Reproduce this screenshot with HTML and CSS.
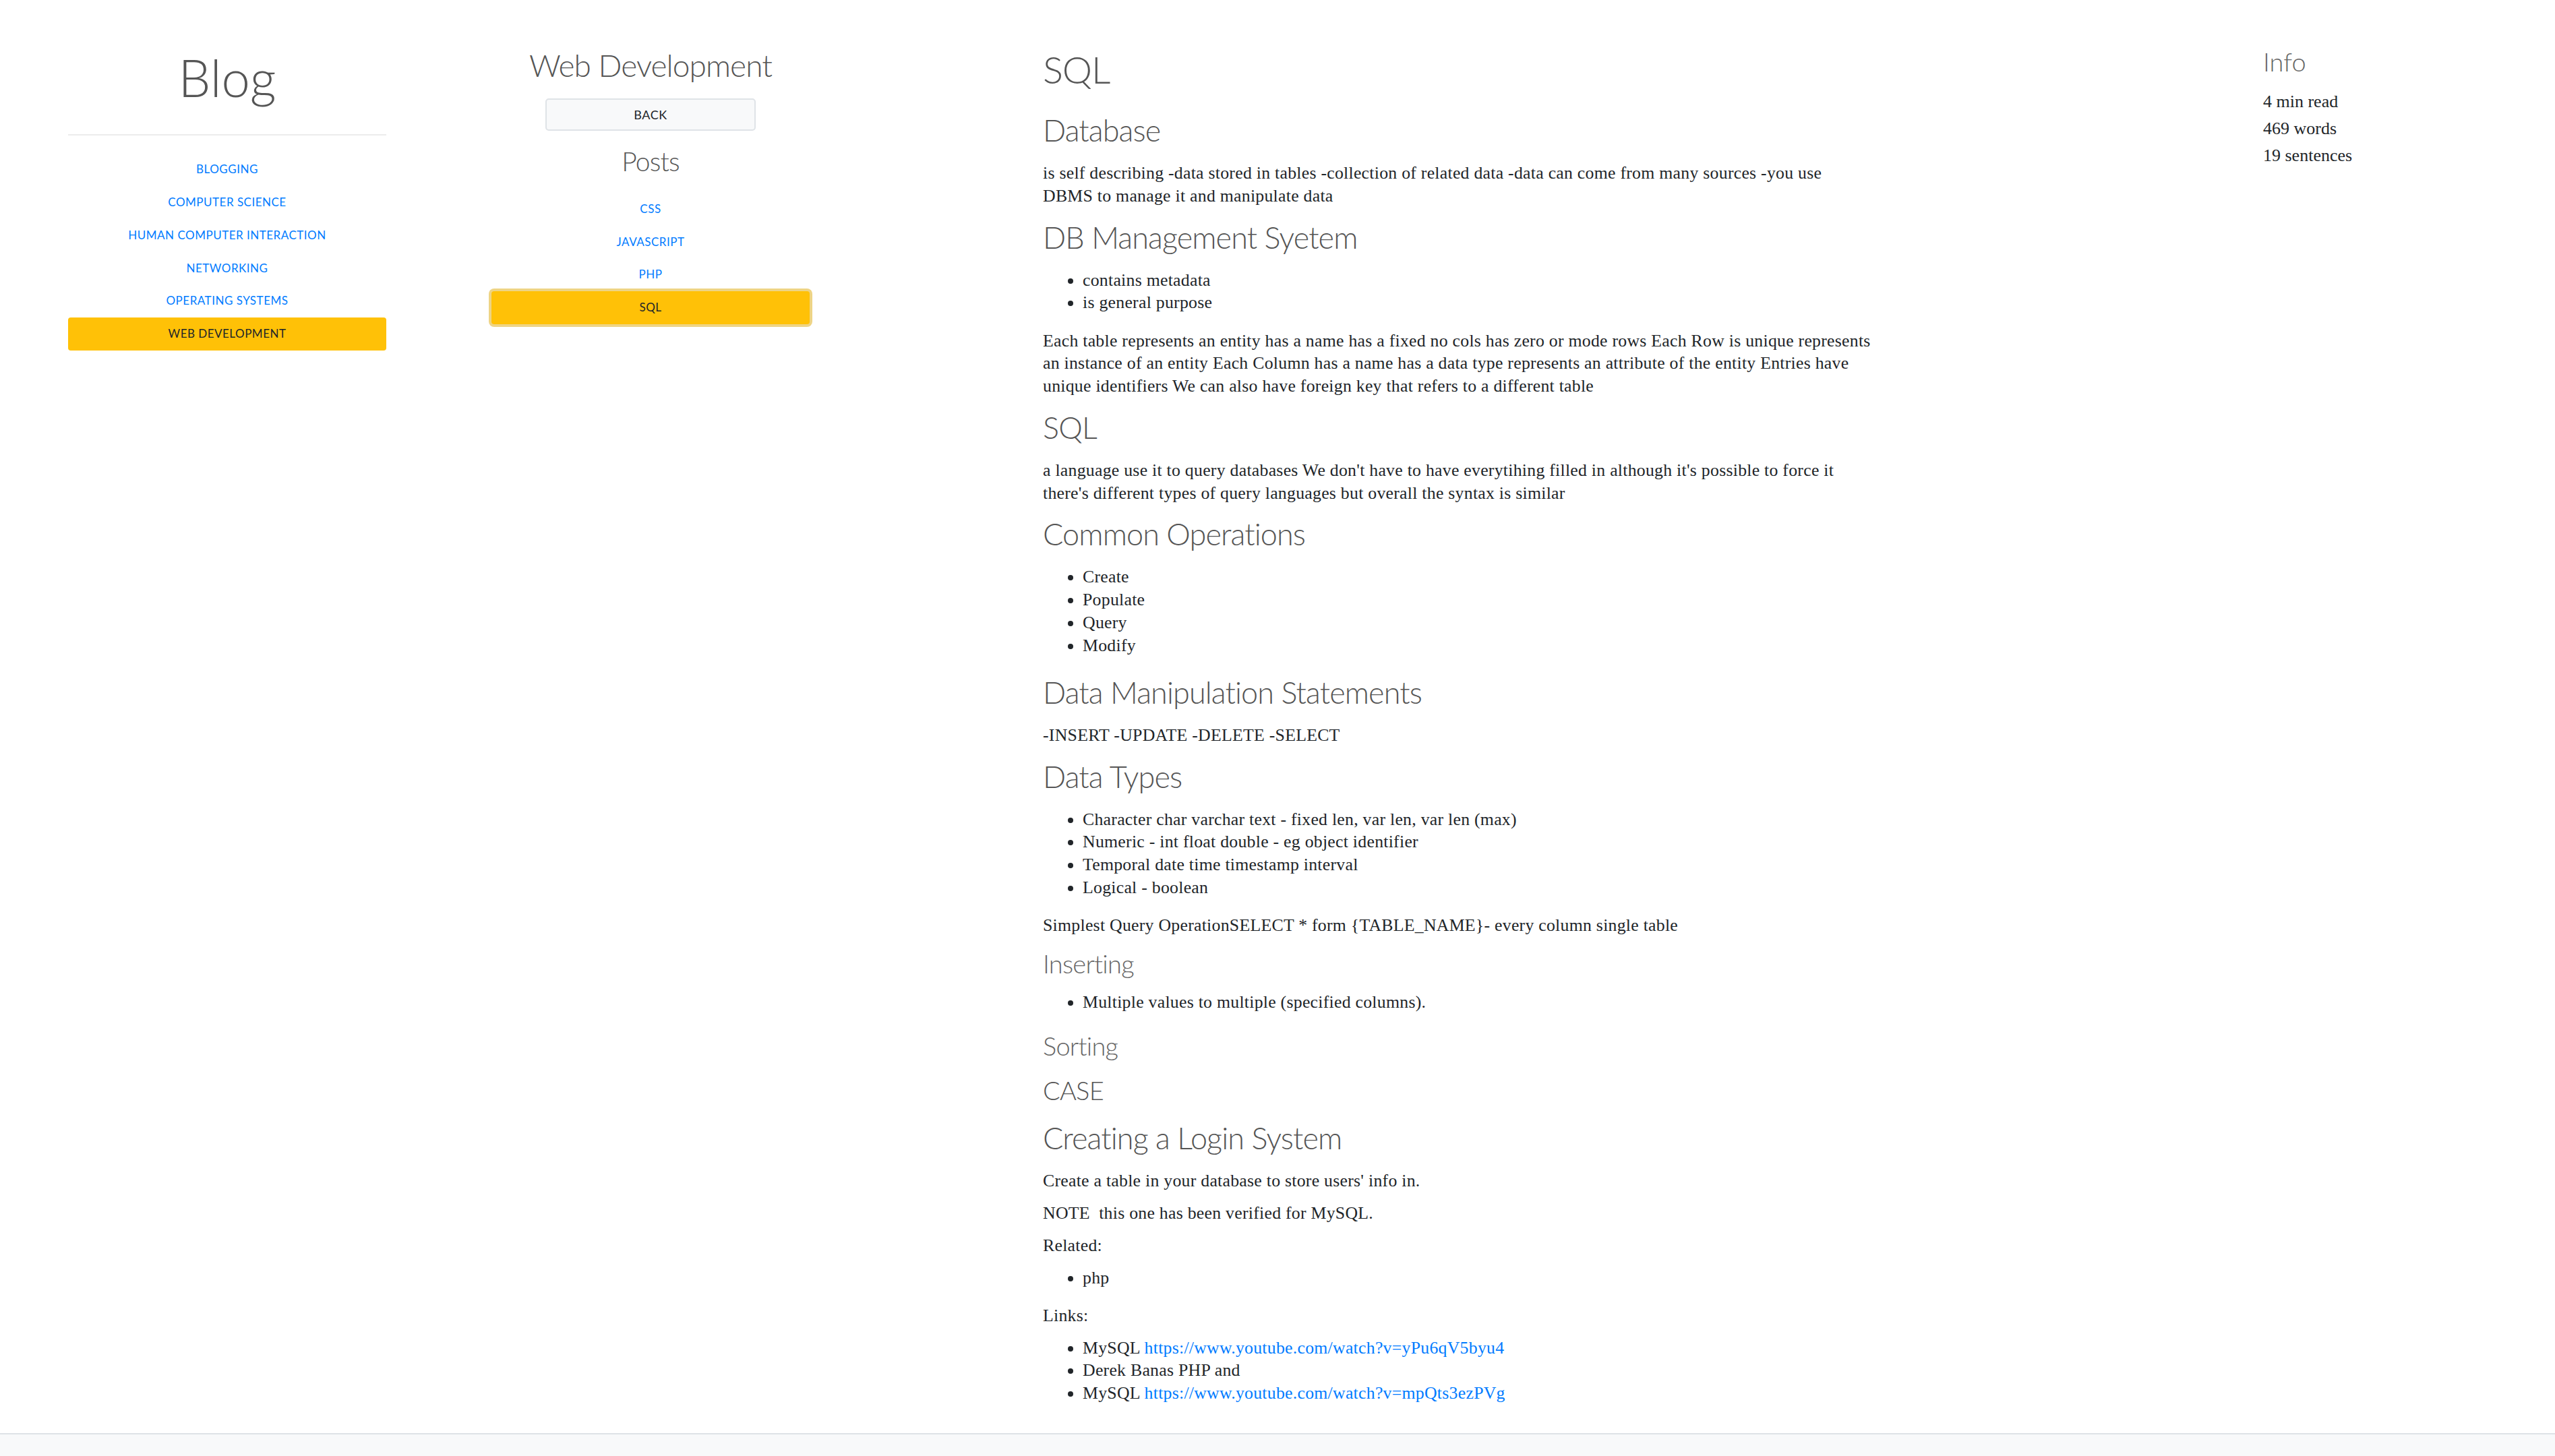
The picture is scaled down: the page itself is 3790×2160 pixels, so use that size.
FILE: index.html
```html
<!DOCTYPE html>
<html lang="en">
<head>
<meta charset="utf-8">
<title>SQL - Blog</title>
<link rel="stylesheet" href="styles.css">
</head>
<body>
<div class="layout">
  <aside class="col-nav">
    <h1 class="brand">Blog</h1>
    <hr class="divider">
    <ul class="menu">
      <li><a href="#">Blogging</a></li>
      <li><a href="#">Computer Science</a></li>
      <li><a href="#">Human Computer Interaction</a></li>
      <li><a href="#">Networking</a></li>
      <li><a href="#">Operating Systems</a></li>
      <li><a href="#" class="active">Web Development</a></li>
    </ul>
  </aside>
  <nav class="col-posts">
    <h2 class="section-title">Web Development</h2>
    <a href="#" class="btn-back">Back</a>
    <h3 class="posts-title">Posts</h3>
    <ul class="menu posts">
      <li><a href="#">CSS</a></li>
      <li><a href="#">JavaScript</a></li>
      <li><a href="#">PHP</a></li>
      <li><a href="#" class="active focus">SQL</a></li>
    </ul>
  </nav>
  <main class="col-main">
    <article class="article">
      <h1 class="title">SQL</h1>
      <h2>Database</h2>
      <p>is self describing -data stored in tables -collection of related data -data can come from many sources -you use<br>DBMS to manage it and manipulate data</p>
      <h2>DB Management Syetem</h2>
      <ul>
        <li>contains metadata</li>
        <li>is general purpose</li>
      </ul>
      <p>Each table represents an entity has a name has a fixed no cols has zero or mode rows Each Row is unique represents<br>an instance of an entity Each Column has a name has a data type represents an attribute of the entity Entries have<br>unique identifiers We can also have foreign key that refers to a different table</p>
      <h2>SQL</h2>
      <p>a language use it to query databases We don't have to have everytihing filled in although it's possible to force it<br>there's different types of query languages but overall the syntax is similar</p>
      <h2>Common Operations</h2>
      <ul>
        <li>Create</li>
        <li>Populate</li>
        <li>Query</li>
        <li>Modify</li>
      </ul>
      <h2>Data Manipulation Statements</h2>
      <p>-INSERT -UPDATE -DELETE -SELECT</p>
      <h2>Data Types</h2>
      <ul>
        <li>Character char varchar text - fixed len, var len, var len (max)</li>
        <li>Numeric - int float double - eg object identifier</li>
        <li>Temporal date time timestamp interval</li>
        <li>Logical - boolean</li>
      </ul>
      <p>Simplest Query OperationSELECT * form {TABLE_NAME}- every column single table</p>
      <h4 class="muted">Inserting</h4>
      <ul>
        <li>Multiple values to multiple (specified columns).</li>
      </ul>
      <h4 class="muted">Sorting</h4>
      <h4>CASE</h4>
      <h2>Creating a Login System</h2>
      <p>Create a table in your database to store users' info in.</p>
      <p>NOTE&nbsp; this one has been verified for MySQL.</p>
      <p>Related:</p>
      <ul>
        <li>php</li>
      </ul>
      <p>Links:</p>
      <ul>
        <li>MySQL <a href="#">https://www.youtube.com/watch?v=yPu6qV5byu4</a></li>
        <li>Derek Banas PHP and</li>
        <li>MySQL <a href="#">https://www.youtube.com/watch?v=mpQts3ezPVg</a></li>
      </ul>
    </article>
  </main>
  <aside class="col-info">
    <h4 class="info-title">Info</h4>
    <div class="stats">
      <p>4 min read</p>
      <p>469 words</p>
      <p>19 sentences</p>
    </div>
  </aside>
</div>
<footer class="footer"></footer>
</body>
</html>
```
FILE: styles.css
```css
* { box-sizing: border-box; }
html, body { margin: 0; padding: 0; }
body {
  font-family: "Liberation Serif", "Times New Roman", serif;
  font-size: 25.8px;
  letter-spacing: 0.25px;
  line-height: 33.75px;
  color: #212529;
  background: #fff;
  min-height: 100vh;
  display: flex;
  flex-direction: column;
}
h1, h2, h3, h4 {
  font-family: Lato, "Open Sans", sans-serif;
  font-weight: 300;
  color: #555;
  line-height: 1.2;
  letter-spacing: -0.02em;
  margin: 0;
}
a { text-decoration: none; color: #007bff; }

.layout {
  display: flex;
  padding: 69px 0 0 23px;
  flex: 1 0 auto;
}
.col-nav, .col-posts {
  width: 628px;
  flex: 0 0 628px;
  padding: 0 78px;
  text-align: center;
}
.col-main {
  width: 1810px;
  flex: 0 0 1810px;
  padding-left: 268px;
}
.col-info {
  padding-left: 268px;
}

/* left column */
.brand { font-size: 76px; letter-spacing: 0; }
.divider {
  border: 0;
  height: 2px;
  background: #ececec;
  margin: 39px 0 26px;
}
.menu { list-style: none; margin: 0; padding: 0; }
.menu a {
  display: block;
  height: 48.8px;
  line-height: 48.8px;
  font-family: Lato, "Open Sans", sans-serif;
  font-size: 17px;
  letter-spacing: 0.5px;
  text-transform: uppercase;
  color: #007bff;
  border-radius: 4px;
}
.menu a.active { background: #ffc107; color: #212529; }
.menu a.focus { box-shadow: 0 0 0 4px rgba(222, 170, 12, 0.5); }

/* posts column */
.section-title { font-size: 46px; }
.btn-back {
  display: block;
  width: 312px;
  height: 48px;
  margin: 22px auto 0;
  background: #f8f9fa;
  border: 2px solid #dfe3e7;
  border-radius: 5px;
  font-family: Lato, "Open Sans", sans-serif;
  font-size: 18px;
  letter-spacing: 0.5px;
  line-height: 44px;
  text-transform: uppercase;
  color: #212529;
}
.posts-title { font-size: 39px; margin-top: 22px; }
.posts { margin-top: 23px; }
.posts a { height: 48.7px; line-height: 48.7px; }

/* article */
.article {
  width: 1300px;
  display: flex;
  flex-direction: column;
}
.article p { margin: 0 0 14px; }
.article ul { margin: 0 0 22.5px; padding-left: 59px; }
.article h1.title { font-size: 56px; margin: 0 0 27px; }
.article h2 { font-size: 45px; margin: 3px 0 20px; }
.article h4 { font-size: 38px; margin: 3px 0 17.5px; }
.article h4.muted { color: #666; }

/* info */
.info-title { font-size: 38px; color: #666; letter-spacing: 0; }
.stats { margin-top: 16px; }
.stats p { margin: 0; font-size: 26px; letter-spacing: 0; line-height: 40px; }

.footer {
  height: 34px;
  border-top: 2px solid #dee2e6;
  background: #f8f9fa;
}
```
